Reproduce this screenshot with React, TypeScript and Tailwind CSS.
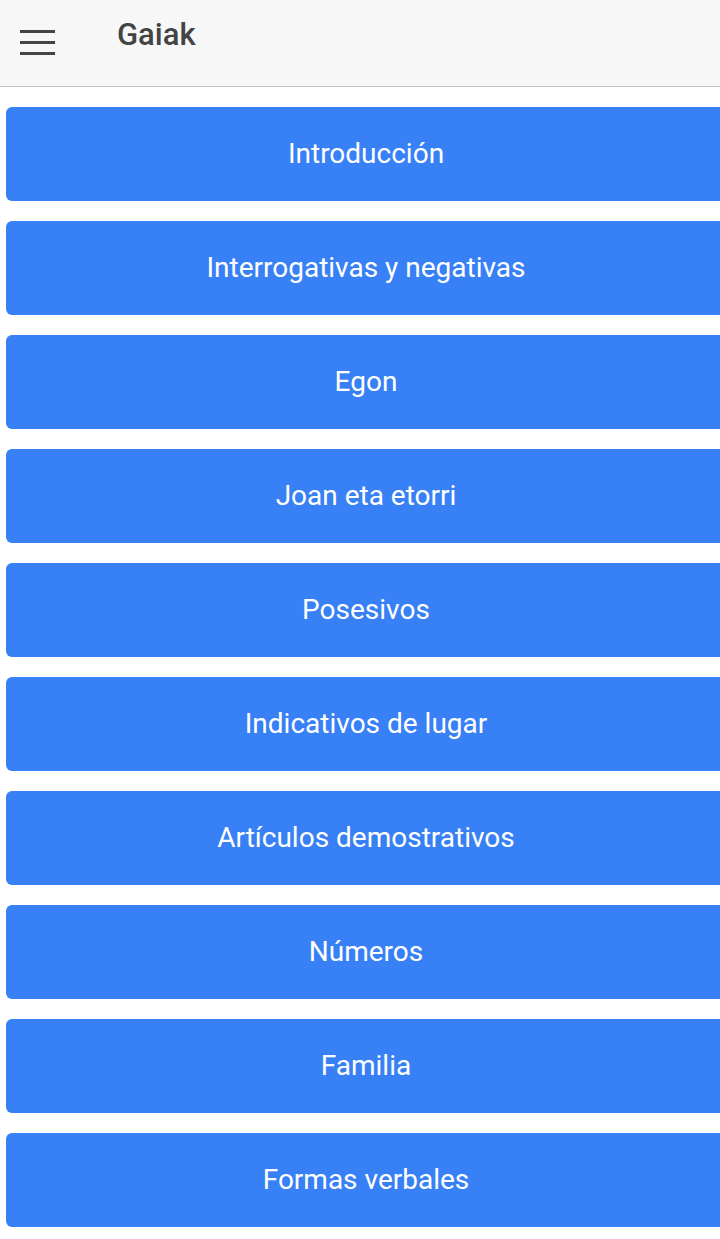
const items = [
  'Introducción',
  'Interrogativas y negativas',
  'Egon',
  'Joan eta etorri',
  'Posesivos',
  'Indicativos de lugar',
  'Artículos demostrativos',
  'Números',
  'Familia',
  'Formas verbales',
];

export default function App() {
  return (
    <div className="w-[720px] h-[1239px] overflow-hidden bg-white font-['Roboto',sans-serif]">
      <header className="h-[87px] bg-[#f7f7f7] border-b border-[#c4c4c4] flex items-center">
        <button className="ml-[20px] w-[35px] flex flex-col gap-[8px] mt-[-1px]">
          <span className="block h-[3px] bg-[#444]" />
          <span className="block h-[3px] bg-[#444]" />
          <span className="block h-[3px] bg-[#444]" />
        </button>
        <h1 className="ml-[62px] mb-[16px] text-[31px] font-medium text-[#444]">Gaiak</h1>
      </header>
      <main className="pt-[20px] pl-[6px] flex flex-col gap-[20px]">
        {items.map((t) => (
          <button
            key={t}
            className="w-[720px] h-[94px] shrink-0 rounded-l-[6px] bg-[#3880f5] text-white text-[28px] flex items-center justify-center"
          >
            {t}
          </button>
        ))}
      </main>
    </div>
  );
}
